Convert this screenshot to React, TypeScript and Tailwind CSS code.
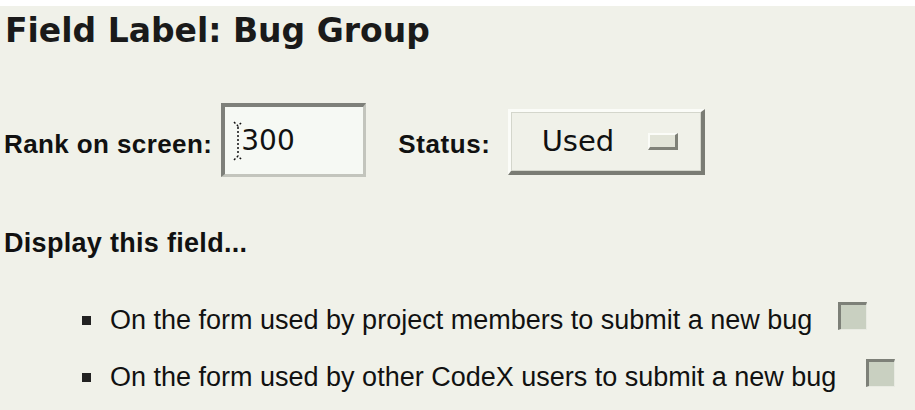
import React from "react";

const rows = [
  "On the form used by project members to submit a new bug",
  "On the form used by other CodeX users to submit a new bug",
];

// Sunken checkbox like the old Motif style
const Check: React.FC = () => (
  <span className="block w-[29px] h-[28px] bg-[#c9d0c1] border-t-[3px] border-l-[3px] border-r border-b border-t-[#7d8078] border-l-[#7d8078] border-r-[#e8eae2] border-b-[#e8eae2]" />
);

export default function App() {
  return (
    <div
      className="w-[915px] h-[410px] overflow-hidden bg-[#f0f1e9] border-t-[6px] border-white text-[#111]"
      style={{ fontFamily: "'Liberation Sans', Arial, sans-serif" }}
    >
      {/* Heading */}
      <h1
        className="pl-[5px] pt-[7px] text-[33px] font-bold leading-[36px] text-[#1a1a1a]"
        style={{ fontFamily: "'DejaVu Sans', Verdana, sans-serif" }}
      >
        Field Label: Bug Group
      </h1>

      {/* Rank + status row */}
      <div className="flex items-center mt-[54px] pl-[4px] h-[74px]">
        <span className="pt-[9px] text-[26px] font-bold tracking-[0.4px]">Rank on screen:</span>
        <div className="ml-[9px] w-[145px] h-[74px] flex items-center bg-[#f6f9f4] border-t-[4px] border-l-[4px] border-r-[3px] border-b-[3px] border-t-[#7e807a] border-l-[#7e807a] border-r-[#c3c5bd] border-b-[#c3c5bd]">
          <svg width="10" height="40" viewBox="0 0 10 40" className="ml-[8px] -mr-[2px]">
            <path d="M1 1l4 4 4-4M5 6v28M1 39l4-4 4 4" stroke="#111" strokeWidth="1.5" strokeDasharray="2 2" fill="none" />
          </svg>
          <span className="text-[28px] leading-none" style={{ fontFamily: "'DejaVu Sans', Verdana, sans-serif" }}>
            300
          </span>
        </div>
        <span className="pt-[9px] ml-[32px] text-[26px] font-bold tracking-[0.6px]">Status:</span>
        <div className="ml-[17px] mt-[4px] w-[197px] h-[66px] flex items-center bg-[#f0f1e9] border-t-[3px] border-l-[3px] border-r-[4px] border-b-[4px] border-t-[#fbfcf8] border-l-[#fbfcf8] border-r-[#7a7c74] border-b-[#7a7c74] shadow-[inset_0_0_0_1px_#d4d6cc]">
          <span className="ml-[31px] text-[29px]" style={{ fontFamily: "'DejaVu Sans', Verdana, sans-serif" }}>
            Used
          </span>
          <span className="ml-[34px] w-[30px] h-[17px] bg-[#e2e4d8] border-t-2 border-l-2 border-r-[3px] border-b-[3px] border-t-[#fbfcf8] border-l-[#fbfcf8] border-r-[#7f8178] border-b-[#7f8178]" />
        </div>
      </div>

      {/* Display section */}
      <div className="mt-[52px] pl-[4px] text-[27px] font-bold leading-[28px] tracking-[0.3px]">Display this field...</div>

      <ul className="mt-[48px] pl-[82px] flex flex-col gap-[27px]">
        {rows.map((r, i) => (
          <li key={r} className="flex items-center text-[27px] leading-[30px]">
            <span className="w-[9px] h-[9px] bg-[#222] mr-[19px]" />
            <span>{r}</span>
            <span className={i === 0 ? "ml-[26px] -mt-[8px]" : "ml-[30px] -mt-[8px]"}>
              <Check />
            </span>
          </li>
        ))}
      </ul>
    </div>
  );
}
